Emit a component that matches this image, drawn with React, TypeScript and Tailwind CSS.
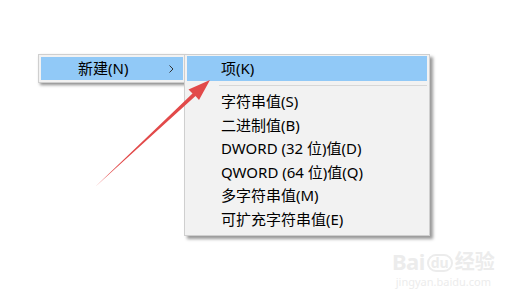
import React from "react";

const font = { fontFamily: '"Noto Sans", "Noto Sans CJK SC", sans-serif' };

const items = [
  "字符串值(S)",
  "二进制值(B)",
  "DWORD (32 位)值(D)",
  "QWORD (64 位)值(Q)",
  "多字符串值(M)",
  "可扩充字符串值(E)",
];

export default function App() {
  return (
    <div
      className="relative w-[513px] h-[302px] bg-white overflow-hidden text-[15px] text-black"
      style={font}
    >
      <div className="flex items-start pt-[54px] pl-[38px]">
        {/* Parent menu */}
        <div className="w-[147px] border border-[#cfcfcf] bg-[#f2f2f2] p-[2px] pr-[1px] shadow-[2px_2px_3px_rgba(0,0,0,0.45)]">
          <div className="h-[23px] bg-[#91c9f7] flex items-center pl-[37px] pr-[6px] justify-between">
            <span className="leading-none">新建(N)</span>
            <svg width="5" height="8" viewBox="0 0 5 8" className="mr-[3px]">
              <path d="M0.5 0.5 L4 4 L0.5 7.5" fill="none" stroke="#333" strokeWidth="1" />
            </svg>
          </div>
        </div>
        {/* Submenu */}
        <div className="-ml-[1px] w-[246px] border border-[#cfcfcf] bg-[#f2f2f2] px-[2px] pt-[1px] pb-[4px] shadow-[3px_3px_3px_rgba(0,0,0,0.4)]">
          <div className="h-[25px] bg-[#91c9f7] flex items-center pl-[34px]">
            <span className="leading-none">项(K)</span>
          </div>
          <div className="h-[9px] flex items-center pl-[32px]">
            <div className="h-px w-full bg-[#d7d7d7]" />
          </div>
          {items.map((t) => (
            <div key={t} className="h-[23.5px] flex items-center pl-[34px]">
              <span className="leading-none">{t}</span>
            </div>
          ))}
        </div>
      </div>

      {/* Red arrow annotation */}
      <svg className="absolute left-0 top-0" width="513" height="302" viewBox="0 0 513 302">
        <polygon
          points="95,187 192.5,93.5 188.5,89.5 210,80 199,100 195.5,96"
          fill="#e24a4a"
        />
      </svg>

      {/* Watermark */}
      <div className="absolute left-[392px] top-[250px] flex flex-col items-center text-[#ececec] select-none">
        <div className="flex items-end gap-[2px] leading-none">
          <span className="text-[22px] font-bold tracking-tight">Bai</span>
          <span className="text-[14px] font-bold rounded-full border-2 border-[#ececec] px-[2px]">du</span>
          <span className="text-[20px] font-bold">经验</span>
        </div>
        <span className="text-[11px] leading-none mt-[4px]">jingyan.baidu.com</span>
      </div>
    </div>
  );
}
